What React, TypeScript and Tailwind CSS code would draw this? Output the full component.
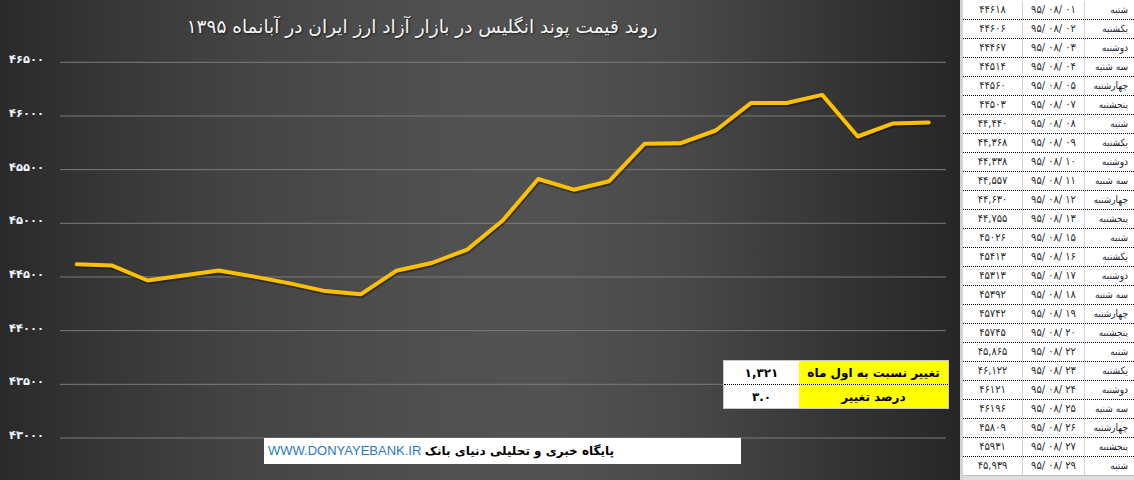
import React from "react";

const fa = (s: string) => s.replace(/[0-9]/g, (d) => "۰۱۲۳۴۵۶۷۸۹"[+d]);

const values = [
  44618, 44606, 44467, 44514, 44560, 44503, 44440, 44368, 44338, 44557, 44630, 44755,
  45026, 45413, 45313, 45392, 45742, 45745, 45865, 46122, 46121, 46196, 45809, 45931, 45939,
];

const rows: [string, string, string][] = [
  ["شنبه", "95/08/01", "44618"],
  ["یکشنبه", "95/08/02", "44606"],
  ["دوشنبه", "95/08/03", "44467"],
  ["سه شنبه", "95/08/04", "44514"],
  ["چهارشنبه", "95/08/05", "44560"],
  ["پنجشنبه", "95/08/07", "44503"],
  ["شنبه", "95/08/08", "44,440"],
  ["یکشنبه", "95/08/09", "44,368"],
  ["دوشنبه", "95/08/10", "44,338"],
  ["سه شنبه", "95/08/11", "44,557"],
  ["چهارشنبه", "95/08/12", "44,630"],
  ["پنجشنبه", "95/08/13", "44,755"],
  ["شنبه", "95/08/15", "45026"],
  ["یکشنبه", "95/08/16", "45413"],
  ["دوشنبه", "95/08/17", "45313"],
  ["سه شنبه", "95/08/18", "45392"],
  ["چهارشنبه", "95/08/19", "45742"],
  ["پنجشنبه", "95/08/20", "45745"],
  ["شنبه", "95/08/22", "45,865"],
  ["یکشنبه", "95/08/23", "46,122"],
  ["دوشنبه", "95/08/24", "46121"],
  ["سه شنبه", "95/08/25", "46196"],
  ["چهارشنبه", "95/08/26", "45809"],
  ["پنجشنبه", "95/08/27", "45931"],
  ["شنبه", "95/08/29", "45,939"],
];

const TOP = 44;
const gridYs = Array.from({ length: 8 }, (_, i) => 62.3 - TOP + 53.67 * i);
const labels = ["46500", "46000", "45500", "45000", "44500", "44000", "43500", "43000"];

export default function App() {
  const pts = values
    .map((v, i) => `${(76.7 + 35.5 * i).toFixed(1)},${(62.3 + (46500 - v) * 0.10733 - TOP).toFixed(1)}`)
    .join(" ");

  return (
    <div
      className="flex w-[1134px] h-[480px] overflow-hidden"
      style={{ fontFamily: 'Tahoma, "DejaVu Sans", sans-serif' }}
    >
      <div className="relative w-[960px] h-[480px] flex flex-col bg-[linear-gradient(to_right,#2a2a2a_0%,#353535_10%,#444444_25%,#505050_45%,#525252_58%,#484848_72%,#363636_86%,#262626_100%)]">
        <div
          dir="rtl"
          className="h-[44px] flex items-center justify-center pt-[10px] pr-[116px] text-[#f4f4f4] text-[18.5px] [text-shadow:1px_1px_2px_rgba(0,0,0,0.6)]"
        >
          {fa("روند قیمت پوند انگلیس در بازار آزاد ارز ایران در آبانماه 1395")}
        </div>
        <svg width="960" height="436" className="block">
          {gridYs.map((y, i) => (
            <g key={i}>
              <line x1="60" x2="946" y1={y} y2={y} stroke="#7c7c7c" strokeWidth="1" />
              <text
                x="44"
                y={y - 2.5}
                textAnchor="end"
                dominantBaseline="middle"
                fill="#eef4ff"
                fontSize="11.5"
                fontWeight="bold"
                fontFamily='Tahoma, "DejaVu Sans", sans-serif'
              >
                {fa(labels[i])}
              </text>
            </g>
          ))}
          <polyline
            points={pts}
            fill="none"
            stroke="rgba(0,0,0,0.35)"
            strokeWidth="4"
            strokeLinejoin="round"
            strokeLinecap="round"
            transform="translate(1,2)"
          />
          <polyline
            points={pts}
            fill="none"
            stroke="#ffc000"
            strokeWidth="4"
            strokeLinejoin="round"
            strokeLinecap="round"
          />
        </svg>

        <div className="absolute left-[723px] top-[360px] w-[226px] border border-[#c8c8c8] bg-white text-black text-[12px] font-bold">
          <div className="flex h-[24px] border-b border-dotted border-black">
            <div className="w-[75px] flex items-center justify-center">{fa("1,321")}</div>
            <div dir="rtl" className="flex-1 flex items-center justify-center bg-[#ffff00]">
              تغییر نسبت به اول ماه
            </div>
          </div>
          <div className="flex h-[23px]">
            <div className="w-[75px] flex items-center justify-center">{fa("3.0")}</div>
            <div dir="rtl" className="flex-1 flex items-center justify-center bg-[#ffff00]">
              درصد تغییر
            </div>
          </div>
        </div>

        <div className="absolute left-[264px] top-[438px] w-[477px] h-[26px] bg-white flex items-center justify-between pl-[4px] pr-[127px]">
          <span className="text-[13px] text-[#2b78c8]" style={{ fontFamily: '"Liberation Sans", Arial, sans-serif' }}>
            WWW.DONYAYEBANK.IR
          </span>
          <span dir="rtl" className="text-[12px] font-bold text-black">
            پایگاه خبری و تحلیلی دنیای بانک
          </span>
        </div>
      </div>

      <div
        className="w-[174px] h-[480px] flex flex-col bg-white border-l-[3px] border-[#d4d4d4]"
        style={{ fontFamily: '"DejaVu Sans Condensed", Tahoma, "DejaVu Sans", sans-serif' }}
      >
        <div className="h-[1px] bg-white" />
        {rows.map(([day, date, val], i) => (
          <div
            key={i}
            className={`grid grid-cols-[60px_62px_49px] h-[19px] leading-[18px] ${
              i < rows.length - 1 ? "border-b border-dotted border-black" : "border-b border-[#bdbdbd]"
            }`}
          >
            <div dir="ltr" className="text-center text-[11px] text-[#2a2a2a] border-r border-[#d4d4d4]">
              {fa(val)}
            </div>
            <div dir="ltr" className="text-center text-[11px] text-[#2a2a2a] border-r border-[#d4d4d4] whitespace-pre">
              {fa(date.replace(/\//g, "/ "))}
            </div>
            <div dir="rtl" className="text-right pr-[6px] text-[10px] text-[#1a1a2a] whitespace-nowrap">
              {day}
            </div>
          </div>
        ))}
        <div className="flex-1 bg-[#dedede]" />
      </div>
    </div>
  );
}
